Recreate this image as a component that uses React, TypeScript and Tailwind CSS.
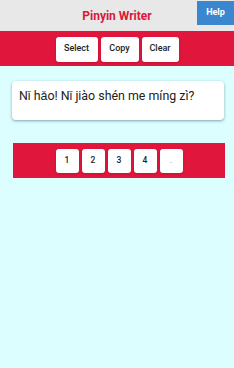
import React from "react";

export default function App() {
  const nums = ["1", "2", "3", "4"];
  return (
    <div className="w-[234px] h-[368px] bg-[#dcfeff] flex flex-col" style={{ fontFamily: "Roboto, 'Liberation Sans', sans-serif" }}>
      <div className="h-[31px] bg-[#e8e8e8] relative flex items-center justify-center pt-[1px]">
        <span className="text-[12px] font-bold text-[#d8193a] leading-none">Pinyin Writer</span>
        <div className="absolute right-0 top-[1px] w-[37px] h-[24px] bg-[#3a86cf] flex items-center justify-center">
          <span className="text-[9px] font-bold text-white">Help</span>
        </div>
      </div>
      <div className="h-[35px] bg-[#e0163c] flex items-center justify-center gap-[3px] pt-[1px]">
        <button className="w-[42px] h-[25px] bg-white rounded-[3px] text-[9px] font-medium text-[#222] shadow-sm">Select</button>
        <button className="w-[38px] h-[25px] bg-white rounded-[3px] text-[9px] font-medium text-[#222] shadow-sm">Copy</button>
        <button className="w-[37px] h-[25px] bg-white rounded-[3px] text-[9px] font-medium text-[#222] shadow-sm">Clear</button>
      </div>
      <div className="pl-[12px] pr-[10px] pt-[15px]">
        <div className="h-[39px] bg-white rounded-[4px] shadow-[0_1px_3px_rgba(0,60,80,0.45)] px-[7px] pt-[8px]">
          <div className="text-[12.4px] text-[#222] leading-[14px]">Nǐ hǎo! Nǐ jiào shén me míng zì?</div>
        </div>
      </div>
      <div className="pl-[13px] pr-[9px] pt-[23px]">
        <div className="h-[35px] bg-[#e0163c] flex items-center justify-center gap-[3px]">
          {nums.map((n) => (
            <button key={n} className="w-[23px] h-[24px] bg-white rounded-[3px] text-[8.5px] font-medium text-[#222] shadow-sm">{n}</button>
          ))}
          <button className="w-[23px] h-[24px] bg-white rounded-[3px] text-[6px] text-[#555] flex items-start justify-center pt-[7px] shadow-sm">..</button>
        </div>
      </div>
    </div>
  );
}
